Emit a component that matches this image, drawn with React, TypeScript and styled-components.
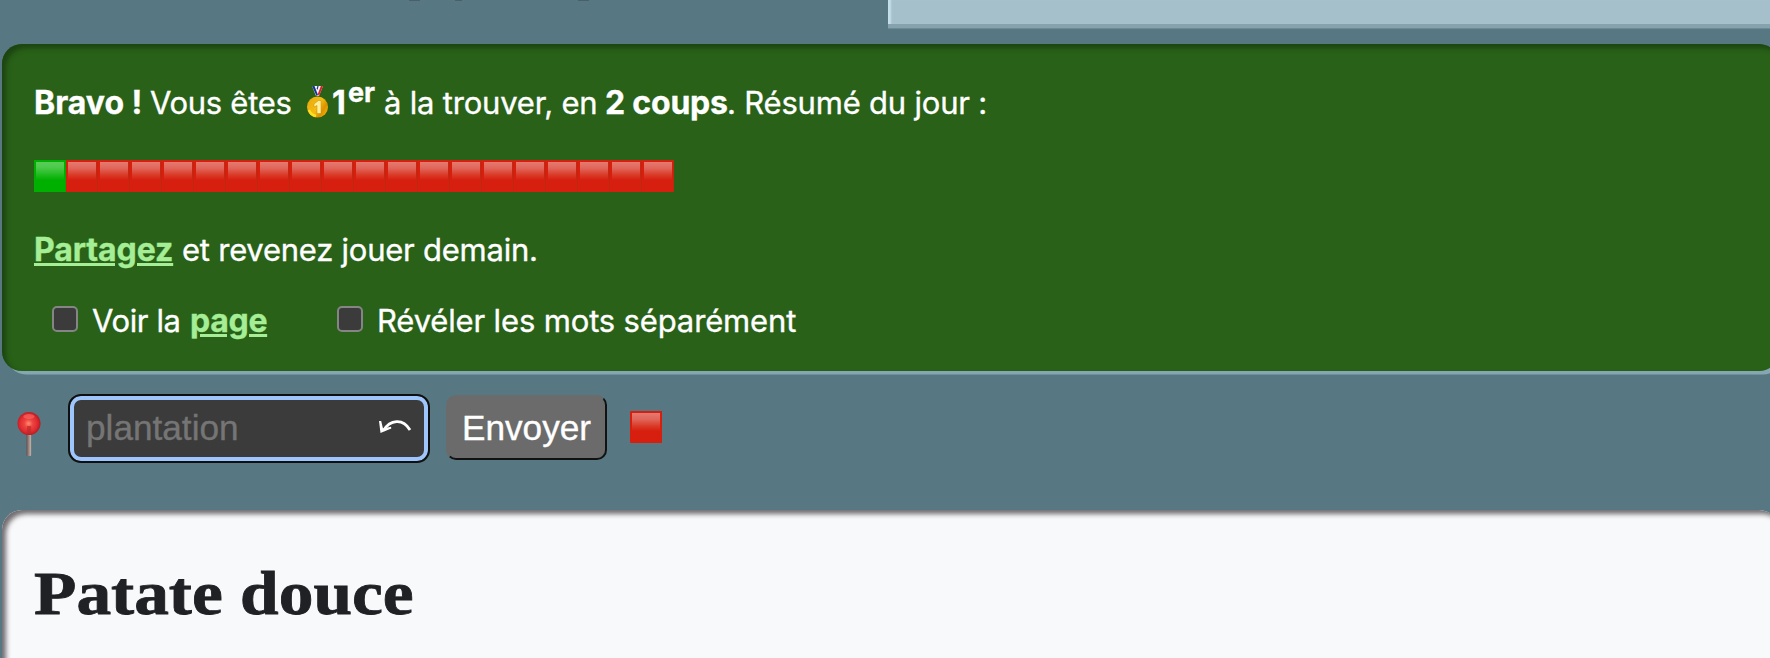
import React from "react";
import styled, { createGlobalStyle } from "styled-components";

const GlobalStyle = createGlobalStyle`
  * { box-sizing: border-box; }
  body {
    margin: 0;
    background: #577882;
    overflow: hidden;
  }
`;

const Page = styled.div`
  width: 1770px;
  height: 658px;
  overflow: hidden;
  display: flex;
  flex-direction: column;
  background: #577882;
  font-family: Inter, "Liberation Sans", sans-serif;
`;

const TopBar = styled.header`
  display: flex;
  flex: none;
  height: 44px;
`;

const TitleTail = styled.div`
  display: flex;
  align-items: flex-start;
  width: 888px;
  flex: none;
`;

const Descender = styled.i<{ $gap: number; $width: number }>`
  width: ${(p) => p.$width}px;
  height: 1px;
  margin-left: ${(p) => p.$gap}px;
  background: #4a5f68;
`;

const TopCard = styled.div`
  flex: 1;
  height: 24px;
  background: #a5bfcb;
  box-shadow: inset 4px 0 2px -1px #c5dfeb, 0 4px 0 #86a3ad, 0 5px 0 #6b8b96;
`;

const Success = styled.section`
  flex: none;
  width: 1777px;
  height: 327px;
  margin-left: 2px;
  padding: 37px 32px 0;
  border-radius: 20px;
  color: #fff;
  background: #296118;
  box-shadow: inset 4px 4px 5px #1d4411, 4px 4px 0 -0.5px #86a6b3;
`;

const Line = styled.div<{ $height: number }>`
  display: flex;
  align-items: baseline;
  height: ${(p) => p.$height}px;
  line-height: 44px;
  white-space: pre;
`;

const Text = styled.span<{ $width: number; $track?: number }>`
  flex: none;
  width: ${(p) => p.$width}px;
  font-size: 31px;
  letter-spacing: ${(p) => p.$track ?? 0}px;
  -webkit-text-stroke: 0.35px currentColor;
`;

const Strong = styled(Text)`
  font-size: 32px;
  font-weight: 700;
`;

const Sup = styled(Text)`
  font-size: 27px;
  font-weight: 700;
  position: relative;
  top: -12px;
`;

const Link = styled.a<{ $track?: number }>`
  font-size: 32px;
  font-weight: 700;
  letter-spacing: ${(p) => p.$track ?? 0}px;
  color: #a5ee96;
  -webkit-text-stroke: 0.35px currentColor;
  text-decoration: underline;
  text-decoration-thickness: 3px;
  text-underline-offset: 2px;
`;

const LinkSlot = styled.span<{ $width: number }>`
  flex: none;
  width: ${(p) => p.$width}px;
`;

const MedalSlot = styled.svg`
  flex: none;
  width: 27px;
  height: 34px;
  align-self: flex-start;
  margin-top: 4px;
`;

const Squares = styled.div`
  display: flex;
  height: 32px;
  margin-bottom: 36px;
`;

const Square = styled.i<{ $won?: boolean; $single?: boolean }>`
  position: relative;
  display: block;
  width: 32px;
  height: 32px;
  border-radius: ${(p) => (p.$single ? 1 : 0)}px;
  background: ${(p) => (p.$won ? "#00b000" : "#d71f10")};
  box-shadow: inset -1px 0 0
    ${(p) => (p.$won ? "#04a404" : p.$single ? "#d41e10" : "#c02711")};

  &::after {
    content: "";
    position: absolute;
    inset: 2px 2px 12px;
    background: ${(p) =>
      p.$won
        ? "linear-gradient(#5bcc59, #4cca4b 30%, #00b000)"
        : "linear-gradient(#e57a70, #e1655a 35%, #da3d2a 70%, #d71f10)"};
  }
`;

const Options = styled.div`
  display: flex;
  align-items: baseline;
  height: 44px;
  line-height: 44px;
  padding-left: 18px;
  white-space: pre;
`;

const Checkbox = styled.input`
  appearance: none;
  flex: none;
  width: 26px;
  height: 26px;
  margin: 0 14px 0 0;
  border: 2px solid #858585;
  border-radius: 5px;
  background: #3b3b3b;
`;

const GuessForm = styled.form`
  display: flex;
  flex: none;
  height: 139px;
  padding: 23px 0 0 17px;
  align-items: flex-start;
`;

const PinIcon = styled.svg`
  width: 24px;
  height: 46px;
  margin: 17px 27px 0 0;
`;

const Field = styled.label`
  display: flex;
  align-items: center;
  width: 362px;
  height: 69px;
  padding: 0 16px 2px 12px;
  border: 2px solid #101010;
  border-radius: 13px;
  background: #3b3b3b;
  box-shadow: inset 0 0 0 4px #9fc6fc;
`;

const GuessInput = styled.input`
  flex: 1;
  min-width: 0;
  padding: 0 0 0 4px;
  border: 0;
  outline: 0;
  background: transparent;
  color: #fff;
  font: 35.2px "Liberation Sans", Arial, sans-serif;

  &::placeholder {
    color: #757575;
    opacity: 1;
    -webkit-text-stroke: 0.35px #757575;
  }
`;

const UndoIcon = styled.svg`
  flex: none;
  width: 34px;
  height: 20px;
`;

const Submit = styled.button`
  width: 161px;
  height: 65px;
  margin: 1px 23px 0 16px;
  padding: 0;
  border: 2px solid;
  border-color: #6b6b6b #121212 #121212 #6b6b6b;
  border-radius: 10px;
  background: #6b6b6b;
  color: #fff;
  font: 35.2px "Liberation Sans", Arial, sans-serif;
  -webkit-text-stroke: 0.35px #fff;
`;

const Result = styled.div`
  padding-top: 17px;
`;

const Article = styled.main`
  flex: none;
  width: 1777px;
  height: 200px;
  margin-left: 2px;
  padding: 45px 32px;
  border-radius: 20px;
  background: #f8f9fb;
  box-shadow: inset 4px 4px 5px #706c70;
`;

const Title = styled.h1`
  margin: 0;
  width: max-content;
  color: #202124;
  font: 700 62px/76px Georgia, "Liberation Serif", serif;
  -webkit-text-stroke: 0.8px #202124;
  transform: scaleX(1.119);
  transform-origin: left;
`;

const Medal = () => (
  <MedalSlot viewBox="0 0 27 34">
    <defs>
      <linearGradient id="gold" x1="0" y1="0.2" x2="1" y2="0.8">
        <stop offset="0" stopColor="#e9a90f" />
        <stop offset="0.5" stopColor="#f6bd10" />
        <stop offset="0.75" stopColor="#dd9200" />
        <stop offset="1" stopColor="#f7b500" />
      </linearGradient>
    </defs>
    <path d="M7 1h11l-4 10h-3z" fill="#f4f4f8" />
    <path d="M7 1h2.500l3.500 9-1.500 1z" fill="#17348f" />
    <path d="M15.800 1H18l-4 10-1.200-2z" fill="#d9222c" />
    <path d="M12.300 1h1.300l-.9 4-1-1.500z" fill="#25408f" />
    <circle cx="12.500" cy="22" r="10.500" fill="url(#gold)" />
    <path d="M4 25a9 9 0 0 0 7 6" fill="none" stroke="#ffdf20" strokeWidth="2.500" />
    <path d="M13.500 15.500H16V28.500h-4v-8l-3 1.500v-3z" fill="#ffef9b" stroke="#c58a0b" strokeWidth=".5" />
  </MedalSlot>
);

const Pin = () => (
  <PinIcon viewBox="0 0 24 46">
    <defs>
      <radialGradient id="pinHead" cx=".48" cy=".5" r=".52">
        <stop offset="0" stopColor="#ff8d70" />
        <stop offset=".35" stopColor="#ee4540" />
        <stop offset=".72" stopColor="#e02c32" />
        <stop offset="1" stopColor="#b51b20" />
      </radialGradient>
      <linearGradient id="needle">
        <stop offset="0" stopColor="#65514e" />
        <stop offset=".5" stopColor="#9c8780" />
        <stop offset="1" stopColor="#c7b5a9" />
      </linearGradient>
    </defs>
    <rect x="9.500" y="20" width="4.600" height="25" rx="1" fill="url(#needle)" />
    <circle cx="12" cy="12.500" r="11.500" fill="url(#pinHead)" />
    <ellipse cx="12" cy="5.500" rx="5.500" ry="2.500" fill="#ff7770" opacity=".5" />
    <path d="M10 15h4l.3 8h-4.400z" fill="#b82a2a" opacity=".65" />
  </PinIcon>
);

export default function App() {
  return (
    <Page>
      <GlobalStyle />
      <TopBar>
        <TitleTail>
          <Descender $gap={409} $width={11} />
          <Descender $gap={35} $width={7} />
          <Descender $gap={116} $width={11} />
        </TitleTail>
        <TopCard />
      </TopBar>

      <Success>
        <Line $height={79}>
          <Strong $width={116}>Bravo !</Strong>
          <Text $width={155} $track={-0.29}>Vous êtes</Text>
          <Medal />
          <Strong $width={16}>1</Strong>
          <Sup $width={36}>er</Sup>
          <Text $width={221} $track={-0.2}>à la trouver, en</Text>
          <Strong $width={122} $track={-0.2}>2 coups</Strong>
          <Text $width={270} $track={-0.2}>. Résumé du jour :</Text>
        </Line>
        <Squares>
          <Square $won />
          {Array.from({ length: 19 }, (_, i) => (
            <Square key={i} />
          ))}
        </Squares>
        <Line $height={71}>
          <LinkSlot $width={148}>
            <Link $track={-0.1}>Partagez</Link>
          </LinkSlot>
          <Text $width={370} $track={-0.24}>et revenez jouer demain.</Text>
        </Line>
        <Options>
          <Checkbox type="checkbox" />
          <Text $width={98} $track={-0.38}>Voir la</Text>
          <LinkSlot $width={147}>
            <Link $track={-0.3}>page</Link>
          </LinkSlot>
          <Checkbox type="checkbox" />
          <Text $width={440} $track={-0.15}>Révéler les mots séparément</Text>
        </Options>
      </Success>

      <GuessForm>
        <Pin />
        <Field>
          <GuessInput placeholder="plantation" />
          <UndoIcon viewBox="0 0 34 20">
            <path d="M5.500 12.500C12 1.500 25 0 32 12" fill="none" stroke="#fff" strokeWidth="2.800" />
            <path d="M1 3h2.200L5 10.500l8-1.700.3 1.800L2.500 15z" fill="#fff" />
          </UndoIcon>
        </Field>
        <Submit type="button">Envoyer</Submit>
        <Result>
          <Square $single />
        </Result>
      </GuessForm>

      <Article>
        <Title>Patate douce</Title>
      </Article>
    </Page>
  );
}
